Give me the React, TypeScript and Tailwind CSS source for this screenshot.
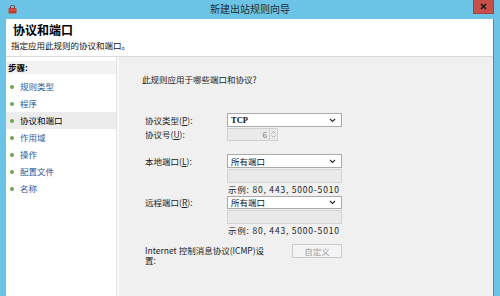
import React from 'react';

const STEPS = ['规则类型', '程序', '协议和端口', '作用域', '操作', '配置文件', '名称'];
const CURRENT = '协议和端口';

function Chevron() {
  return (
    <svg width="7" height="5" viewBox="0 0 7 5" className="mr-[5px]">
      <path d="M1 1 L3.5 3.5 L6 1" fill="none" stroke="#333" strokeWidth="1.2" />
    </svg>
  );
}

function Select({ value, h = 14, bold = false }: { value: string; h?: number; bold?: boolean }) {
  return (
    <div
      className="w-[115px] bg-white border border-[#a9a9a9] flex items-center justify-between pl-[3px]"
      style={{ height: h }}
    >
      <span
        className={'text-[8.5px] leading-none text-[#111] ' + (bold ? 'font-bold' : '')}
        style={bold ? { fontFamily: '"Liberation Serif", serif' } : undefined}
      >
        {value}
      </span>
      <Chevron />
    </div>
  );
}

function Label({ text, k }: { text: string; k: string }) {
  return (
    <div className="w-[82px] shrink-0 text-[8.5px] text-[#222]">
      {text}(<span className="underline">{k}</span>):
    </div>
  );
}

export default function App() {
  return (
    <div
      className="w-[500px] h-[296px] overflow-hidden bg-[#6bc4e6] flex flex-col"
      style={{ fontFamily: '"Noto Sans CJK SC", "Liberation Sans", sans-serif' }}
    >
      {/* title bar */}
      <div className="h-[19px] w-full shrink-0 flex items-start justify-center relative">
        <svg width="9" height="9" viewBox="0 0 9 9" className="absolute left-[8px] top-[5px]">
          <rect x="0.5" y="3" width="8" height="5.5" rx="1" fill="#c0392b" />
          <path d="M2.5 3 V1.6 A2 1.6 0 0 1 6.5 1.6 V3" fill="none" stroke="#8a2a20" strokeWidth="1" />
          <rect x="1.5" y="4.5" width="6" height="1" fill="#e57368" />
        </svg>
        <div className="text-[10px] leading-[10px] mt-[4px] text-[#1f2f3a]">新建出站规则向导</div>
        <div className="absolute right-[6px] top-0 w-[21px] h-[14px] bg-[#c7504b] border border-[#a8403c] border-t-0 flex items-center justify-center">
          <svg width="7" height="7" viewBox="0 0 7 7">
            <path d="M1 1 L6 6 M6 1 L1 6" stroke="#1a1a1a" strokeWidth="1.6" />
          </svg>
        </div>
      </div>

      {/* body */}
      <div className="flex-1 flex flex-col ml-[6px] mr-[6px] border-r border-[#3d8fb5] bg-white">
        {/* header */}
        <div className="h-[38px] shrink-0 border-b border-[#d9d9d9] pl-[7px] pt-[4px]">
          <div className="text-[12px] leading-[14px] font-bold text-black">协议和端口</div>
          <div className="text-[8.5px] leading-[10px] mt-[3px] -ml-[2px] text-[#111]">指定应用此规则的协议和端口。</div>
        </div>

        <div className="flex-1 flex">
          {/* steps */}
          <div className="w-[111px] shrink-0 bg-white border-r border-[#e3e3e3] pt-[4px]">
            <div className="h-[13px] bg-[#f2f2f2] pl-[2px] text-[8.5px] leading-[13px] font-bold text-black">步骤:</div>
            <div className="mt-[4px] flex flex-col">
              {STEPS.map(s => (
                <div
                  key={s}
                  className={
                    'h-[17px] flex items-center gap-[6px] pl-[4px] text-[8.5px] ' +
                    (s === CURRENT ? 'bg-[#ececec] text-black' : 'text-[#1f5a9e]')
                  }
                >
                  <span className="w-[4px] h-[4px] rounded-full bg-[#6aa84f] shrink-0" />
                  {s}
                </div>
              ))}
            </div>
          </div>
          <div className="w-[2px] bg-[#f7f7f7]" />

          {/* form */}
          <div className="flex-1 bg-[#f0f0f0] pl-[23px] pt-[17px] text-[8.5px] text-[#222]">
            <div className="h-[10px] leading-[10px]">此规则应用于哪些端口和协议?</div>

            <div className="ml-[3px] mt-[29px] flex flex-col">
              <div className="flex items-center">
                <Label text="协议类型" k="P" />
                <Select value="TCP" bold />
              </div>
              <div className="flex items-center mt-[1px]">
                <Label text="协议号" k="U" />
                <div className="w-[51px] h-[13px] border border-[#d0d0d0] bg-[#eaeaea] flex items-center justify-end">
                  <span className="text-[8px] text-[#777] mr-[2px]">6</span>
                  <div className="w-[8px] h-full border-l border-[#d0d0d0] flex flex-col items-center justify-center gap-[1px]">
                    <svg width="5" height="3" viewBox="0 0 5 3"><path d="M0.5 2.5 L2.5 0.5 L4.5 2.5" fill="none" stroke="#999" strokeWidth="0.8" /></svg>
                    <svg width="5" height="3" viewBox="0 0 5 3"><path d="M0.5 0.5 L2.5 2.5 L4.5 0.5" fill="none" stroke="#999" strokeWidth="0.8" /></svg>
                  </div>
                </div>
              </div>

              <div className="flex items-center mt-[13px]">
                <Label text="本地端口" k="L" />
                <Select value="所有端口" />
              </div>
              <div className="ml-[82px] mt-[1px] w-[115px] h-[14px] border border-[#d4d4d4] bg-[#e9e9e9]" />
              <div className="ml-[82px] h-[12px] leading-[12px] pl-[1px] tracking-[0.8px]">示例: 80, 443, 5000-5010</div>

              <div className="flex items-center mt-[1px]">
                <Label text="远程端口" k="R" />
                <Select value="所有端口" h={13} />
              </div>
              <div className="ml-[82px] mt-[1px] w-[115px] h-[14px] border border-[#d4d4d4] bg-[#e9e9e9]" />
              <div className="ml-[82px] h-[12px] leading-[12px] pl-[1px] tracking-[0.8px]">示例: 80, 443, 5000-5010</div>

              <div className="flex items-start mt-[8px]">
                <div className="w-[147px] shrink-0 pr-[20px] leading-[10px] mt-[1px]">Internet 控制消息协议(ICMP)设置:</div>
                <div className="w-[50px] h-[14px] border border-[#cacaca] bg-[#f4f4f4] flex items-center justify-center text-[8.5px] text-[#a0a0a0]">
                  自定义
                </div>
              </div>
            </div>
          </div>
        </div>
      </div>
    </div>
  );
}
